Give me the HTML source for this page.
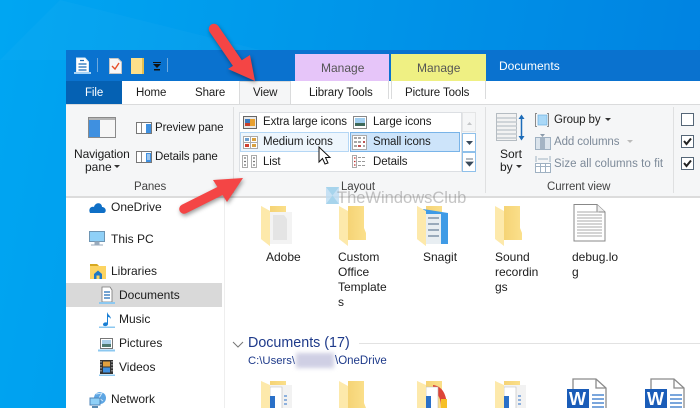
<!DOCTYPE html>
<html><head><meta charset="utf-8">
<style>
html,body{margin:0;padding:0}
#p{position:relative;width:700px;height:408px;overflow:hidden;background:linear-gradient(100deg,#00a6f2 0%,#0098ea 40%,#0080e0 100%);font-family:"Liberation Sans",sans-serif;font-size:12px;color:#1c1c1c}
.a{position:absolute}
.t{position:absolute;white-space:nowrap;line-height:14px}
.r{font-size:11.5px;letter-spacing:-.1px}
.l{color:#444}
.g{color:#7d8a99}
svg{position:absolute;overflow:visible}
</style></head><body><div id="p">
<svg class="a" style="left:0;top:0" width="700" height="50"><path d="M60 0 L300 60 L0 60Z" fill="#fff" opacity=".025"/></svg>
<div class="a" style="left:66px;top:50px;width:634px;height:31px;background:#0a72cf"></div>
<div class="a" style="left:66px;top:81px;width:634px;height:24px;background:#fff"></div>
<div class="a" style="left:66px;top:81px;width:56px;height:23px;background:#0561b3"></div>
<div class="a" style="left:239px;top:81px;width:52px;height:24px;background:#f5f6f7;border:1px solid #dadbdc;border-bottom:0;box-sizing:border-box"></div>
<div class="a" style="left:295px;top:54px;width:94px;height:27px;background:#e6c5f9"></div>
<div class="a" style="left:391px;top:54px;width:95px;height:27px;background:#eff083"></div>
<div class="a" style="left:388px;top:81px;width:1px;height:18px;background:#dadbdc"></div>
<div class="a" style="left:391px;top:81px;width:1px;height:18px;background:#dadbdc"></div>
<div class="a" style="left:485px;top:81px;width:1px;height:18px;background:#dadbdc"></div>
<div class="a" style="left:66px;top:104px;width:634px;height:1px;background:#dadbdc"></div>
<div class="a" style="left:66px;top:105px;width:634px;height:91px;background:#f5f6f7"></div>
<div class="a" style="left:66px;top:196px;width:634px;height:2px;background:#dcdcdc"></div>
<div class="a" style="left:66px;top:198px;width:634px;height:210px;background:#fff"></div>
<div class="a" style="left:233px;top:107px;width:1px;height:86px;background:#dfe0e1"></div>
<div class="a" style="left:485px;top:107px;width:1px;height:86px;background:#dfe0e1"></div>
<div class="a" style="left:673px;top:107px;width:1px;height:86px;background:#dfe0e1"></div>
<div class="a" style="left:224px;top:198px;width:1px;height:210px;background:#eeeeee"></div>

<!-- quick access -->
<svg style="left:72px;top:55px" width="100" height="24">
<path d="M4.500 3H13L16.500 7V17H4.500Z" fill="#fff" stroke="#dfeaf5"/><path d="M6.500 9h8M6.500 12h8M6.500 15h8M8 5.500h4" stroke="#1d6cb8" stroke-width="1.200"/><path d="M2 17H19V19H2Z" fill="#a8d4f5"/>
<rect x="25" y="3" width="1" height="14" fill="#6ea9dd"/>
<path d="M37.500 3.500H46L49.500 7V18.500H37.500Z" fill="#f7f7f7" stroke="#c5c5c5"/><path d="M40 11L43 14L47 8" fill="none" stroke="#e8502b" stroke-width="1.400"/>
<rect x="59" y="3" width="12" height="16" fill="#fde08a"/><rect x="70" y="3" width="2" height="16" fill="#e6bf4f"/>
<path d="M81 9H89L85 13Z" fill="#111"/><rect x="81" y="7" width="8" height="1" fill="#111"/><rect x="82" y="14" width="6" height="1.500" fill="#111"/>
<rect x="95" y="3" width="1" height="14" fill="#6ea9dd"/>
</svg>

<!-- tabs -->
<div class="t r" style="left:85px;top:86px;color:#fff">File</div>
<div class="t r" style="left:136px;top:86px">Home</div>
<div class="t r" style="left:195px;top:86px">Share</div>
<div class="t r" style="left:253px;top:86px">View</div>
<div class="t r" style="left:309px;top:86px">Library Tools</div>
<div class="t r" style="left:405px;top:86px">Picture Tools</div>
<div class="t" style="left:321px;top:61px;color:#555">Manage</div>
<div class="t" style="left:417px;top:61px;color:#555">Manage</div>
<div class="t" style="left:499px;top:59px;color:#fff">Documents</div>

<!-- panes -->
<svg style="left:88px;top:117px" width="30" height="22"><rect x=".5" y=".5" width="27" height="20" fill="#f6f6f6" stroke="#8a8a8a"/><rect x="1" y="3" width="11" height="17" fill="#3f90e0"/><rect x="1" y="1" width="26" height="2" fill="#b5b5b5"/></svg>
<div class="t" style="left:74px;top:147px;letter-spacing:-.1px">Navigation</div>
<div class="t" style="left:85px;top:160px">pane</div>
<svg style="left:114px;top:165px" width="6" height="4"><path d="M0 0H6L3 3Z" fill="#333"/></svg>
<svg style="left:136px;top:122px" width="16" height="12"><rect x=".5" y=".5" width="15" height="11" fill="#fff" stroke="#777"/><rect x="5" y="1" width="1" height="10" fill="#888"/><rect x="10" y="2" width="5" height="9" fill="#3f90e0"/></svg>
<svg style="left:136px;top:151px" width="16" height="12"><rect x=".5" y=".5" width="15" height="11" fill="#fff" stroke="#777"/><rect x="5" y="1" width="1" height="10" fill="#888"/><rect x="10" y="2" width="5" height="9" fill="#3f90e0"/><path d="M11 4h3M11 6h3M11 8h3" stroke="#fff"/></svg>
<div class="t r" style="left:155px;top:121px">Preview pane</div>
<div class="t r" style="left:155px;top:150px">Details pane</div>
<div class="t r l" style="left:134px;top:180px">Panes</div>

<!-- layout gallery -->
<div class="a" style="left:239px;top:112px;width:223px;height:60px;background:#fff;border:1px solid #dcdfe3;box-sizing:border-box"></div>
<div class="a" style="left:240px;top:132px;width:109px;height:20px;background:#eef6fd;border:1px solid #b5d7f5;box-sizing:border-box"></div>
<div class="a" style="left:350px;top:132px;width:110px;height:20px;background:#cde4fa;border:1px solid #79b4e8;box-sizing:border-box"></div>
<div class="a" style="left:462px;top:112px;width:14px;height:20px;background:#f5f6f7;border:1px solid #e4e5e6;box-sizing:border-box"></div>
<div class="a" style="left:462px;top:133px;width:14px;height:19px;background:#fff;border:1px solid #8fc0ea;box-sizing:border-box"></div>
<div class="a" style="left:462px;top:152px;width:14px;height:20px;background:#fff;border:1px solid #8fc0ea;box-sizing:border-box"></div>
<svg style="left:465px;top:120px" width="10" height="50"><path d="M2 5L4.500 2L7 5Z" fill="#c4c6c8"/><path d="M1 21H8L4.500 25Z" fill="#3a4a5a"/><path d="M1 39H8M1 42H8L4.500 46Z" stroke="#3a4a5a" fill="#3a4a5a" stroke-width=".8"/></svg>
<svg style="left:243px;top:116px" width="14" height="13"><rect x=".5" y=".5" width="13" height="12" fill="#e8e8e8" stroke="#666"/><rect x="2" y="3" width="10" height="7" fill="#3d7bbf"/><rect x="7" y="3" width="5" height="7" fill="#e8a030"/><rect x="2" y="7" width="5" height="3" fill="#c8402a"/></svg>
<svg style="left:353px;top:116px" width="14" height="13"><rect x=".5" y=".5" width="13" height="12" fill="#fff" stroke="#888"/><rect x="2" y="2" width="10" height="5" fill="#9fcdef"/><rect x="2" y="7" width="10" height="3" fill="#3f6a5a"/></svg>
<svg style="left:243px;top:136px" width="15" height="13"><rect x=".5" y=".5" width="14" height="12" fill="#fff" stroke="#aaa"/><path d="M7.500 0V13M0 6.500H15" stroke="#aaa"/><rect x="2" y="2" width="4" height="3" fill="#6d9fd0"/><rect x="9" y="2" width="4" height="3" fill="#d8a040"/><rect x="2" y="8" width="4" height="3" fill="#d04030"/><rect x="9" y="8" width="4" height="3" fill="#d8a040"/></svg>
<svg style="left:352px;top:135px" width="15" height="15"><rect x=".5" y=".5" width="14" height="14" fill="#fff" stroke="#aaa"/><path d="M2 3h3M6 3h3M11 3h2M2 7h3M6 7h3M11 7h2M2 11h3M6 11h3M11 11h2" stroke="#888" stroke-width="1.500"/><path d="M11 7h2M6 11h3" stroke="#c03030" stroke-width="1.500"/></svg>
<svg style="left:242px;top:155px" width="16" height="13"><path d="M.5.5h5v12h-5zM9.500.5h5v12h-5z" fill="#fff" stroke="#aaa"/><path d="M2 3h2M2 6.500h2M2 10h2M11 3h2M11 6.500h2M11 10h2" stroke="#777" stroke-width="1.200"/></svg>
<svg style="left:352px;top:155px" width="16" height="13"><path d="M.5.5h4v12h-4z" fill="#fff" stroke="#aaa"/><path d="M2 3h1.500M2 6.500h1.500M2 10h1.500" stroke="#c03030" stroke-width="1.200"/><path d="M6 2.500h3M10 2.500h3M6 6.500h3M10 6.500h3M6 10.500h3M10 10.500h3" stroke="#999"/></svg>
<div class="t r" style="left:263px;top:115px">Extra large icons</div>
<div class="t r" style="left:373px;top:115px">Large icons</div>
<div class="t r" style="left:263px;top:135px">Medium icons</div>
<div class="t r" style="left:373px;top:135px">Small icons</div>
<div class="t r" style="left:263px;top:155px">List</div>
<div class="t r" style="left:373px;top:155px">Details</div>
<div class="t r l" style="left:341px;top:180px">Layout</div>

<!-- current view -->
<svg style="left:496px;top:113px" width="32" height="30"><rect x=".5" y=".5" width="20" height="27" fill="#f2f2f2" stroke="#b5bcc2"/><path d="M1 5h20M1 9h20M1 13h20M1 17h20M1 21h20M1 25h20" stroke="#c3cad0" stroke-width="1.500"/><path d="M25.500 3V26" stroke="#1d6cb8" stroke-width="1.500"/><path d="M22.500 6L25.500 1.500L28.500 6ZM22.500 23L25.500 27.500L28.500 23Z" fill="#1d6cb8"/></svg>
<div class="t" style="left:500px;top:147px">Sort</div>
<div class="t" style="left:500px;top:160px">by</div>
<svg style="left:516px;top:165px" width="6" height="4"><path d="M0 0H6L3 3Z" fill="#333"/></svg>
<svg style="left:535px;top:113px" width="16" height="14"><path d="M2 .5H.5V13.500H2M12 .5H13.500V13.500H12" fill="none" stroke="#8a8a8a"/><rect x="3" y="2" width="9" height="10" fill="#a9d8f7" stroke="#6fb2e0" stroke-width=".7"/></svg>
<svg style="left:535px;top:134px" width="17" height="17"><rect x=".5" y="3.500" width="15" height="12" fill="#dbe4ec" stroke="#9fb1c2"/><rect x="5" y="4" width="5" height="11" fill="#a4b4c4"/><path d="M5 0H10L7.500 3Z" fill="#8a9aaa"/></svg>
<svg style="left:535px;top:156px" width="17" height="18"><path d="M1 0V6M15 0V6M3 3H13" stroke="#9fb1c2"/><rect x=".5" y="7.500" width="15" height="9" fill="#fff" stroke="#9fb1c2"/><path d="M0 10.500H16M5.500 8V16M10.500 8V16" stroke="#9fb1c2"/></svg>
<div class="t r" style="left:554px;top:113px">Group by</div>
<svg style="left:605px;top:118px" width="6" height="4"><path d="M0 0H6L3 3Z" fill="#333"/></svg>
<div class="t g r" style="left:554px;top:135px">Add columns</div>
<svg style="left:627px;top:140px" width="6" height="4"><path d="M0 0H6L3 3Z" fill="#bbb"/></svg>
<div class="t g r" style="left:554px;top:157px;letter-spacing:.05px">Size all columns to fit</div>
<div class="t r l" style="left:547px;top:180px">Current view</div>
<svg style="left:681px;top:113px" width="14" height="72"><rect x=".5" y=".5" width="12" height="12" fill="#fff" stroke="#556677"/><rect x=".5" y="22.500" width="12" height="12" fill="#fff" stroke="#556677"/><rect x=".5" y="44.500" width="12" height="12" fill="#fff" stroke="#556677"/><path d="M3 28L5.500 31L10 25.500M3 50L5.500 53L10 47.500" fill="none" stroke="#222" stroke-width="2"/></svg>

<!-- watermark -->
<svg style="left:326px;top:187px" width="13" height="17"><rect width="13" height="17" fill="#bcdcf2" opacity=".8"/><path d="M0 0L6.500 8.500L13 0M0 17L6.500 8.500L13 17" fill="#a7d4ec"/></svg>
<div class="t" style="left:337px;top:190px;font-size:16.500px;line-height:17px;color:rgba(110,110,110,.4)">TheWindowsClub</div>

<!-- nav -->
<div class="a" style="left:66px;top:283px;width:156px;height:24px;background:#d9d9d9"></div>
<svg style="left:89px;top:200px" width="18" height="14"><path d="M1 13C-1 9 2 6 5 7C6 2 13 2 13 7C17 7 18 12 15 13Z" fill="#0f6fc6"/></svg>
<svg style="left:89px;top:231px" width="18" height="16"><rect x=".5" y=".5" width="15" height="10" fill="#8fd0f7" stroke="#6e95b3"/><path d="M6 11h4v2H6zM2 14h12" stroke="#9ab" fill="#9ab"/></svg>
<svg style="left:90px;top:263px" width="17" height="16"><path d="M0 1H7L9 3H16V16H0Z" fill="#fcd462"/><path d="M0 1H7L9 3H0Z" fill="#d7a922"/><path d="M4 11L8 7.500L12 11V16H9.500V12.500H6.500V16H4Z" fill="#1f78c8"/></svg>
<svg style="left:98px;top:286px" width="18" height="19"><path d="M4 1H12L14 4V16H4Z" fill="#fff" stroke="#777" stroke-width=".8"/><path d="M6 6h6M6 9h6M6 12h6" stroke="#1d6cb8" stroke-width="1.300"/><path d="M1 16H17V18H1Z" fill="#8cc8f0"/></svg>
<svg style="left:98px;top:311px" width="18" height="18"><path d="M9 1C10 4 13 5 13 8C12 6.500 11 6 10 6V13C10 15.500 5 16 5 13.500C5 11.500 7.500 11 9 11.500Z" fill="#1a7fd4"/><path d="M1 15.500H17V17H1Z" fill="#8cc8f0"/></svg>
<svg style="left:98px;top:335px" width="18" height="18"><rect x="2.500" y="3.500" width="12" height="10" fill="#fff" stroke="#777"/><rect x="4" y="5" width="9" height="7" fill="#a9cfe8"/><rect x="4" y="9" width="9" height="3" fill="#4f7a70"/><path d="M0 14.500H17V16.500H0Z" fill="#8cc8f0"/></svg>
<svg style="left:98px;top:359px" width="18" height="18"><rect x="2" y="1" width="13" height="14" fill="#333"/><rect x="5" y="2.500" width="7" height="5" fill="#e0a040"/><rect x="5" y="8.500" width="7" height="5" fill="#3f90e0"/><path d="M3 2v12M14 2v12" stroke="#ccc" stroke-dasharray="1.500 1.500"/><path d="M1 15.500H17V17H1Z" fill="#8cc8f0"/></svg>
<svg style="left:89px;top:391px" width="18" height="17"><circle cx="11" cy="7" r="6" fill="#5da6e4"/><path d="M7 3L13 2L10 7L14 10" stroke="#cfe6f8" fill="none"/><rect x="1" y="7" width="10" height="7" fill="#8fd0f7" stroke="#4f86b8"/><path d="M3 16h6" stroke="#5a8ab0" stroke-width="2"/></svg>
<div class="t" style="left:111px;top:200px">OneDrive</div>
<div class="t" style="left:111px;top:232px">This PC</div>
<div class="t" style="left:111px;top:264px">Libraries</div>
<div class="t" style="left:119px;top:288px">Documents</div>
<div class="t" style="left:119px;top:312px">Music</div>
<div class="t" style="left:119px;top:336px">Pictures</div>
<div class="t" style="left:119px;top:360px">Videos</div>
<div class="t" style="left:111px;top:392px">Network</div>

<!-- folders -->
<svg width="0" height="0"><defs>
<linearGradient id="b" x1="0" x2="1"><stop offset="0" stop-color="#f2cd6a"/><stop offset="1" stop-color="#fbe08c"/></linearGradient>
<symbol id="f" viewBox="0 0 34 42" width="34" height="42" overflow="visible"><path d="M0 0H25V22L27 27V34H9V0Z" fill="url(#b)"/><path d="M0 0L9 5V40L0 33Z" fill="#fde9ab"/></symbol>
<symbol id="w" viewBox="0 0 40 30" width="40" height="30" overflow="visible"><path d="M6 1H29L39 10V40H6Z" fill="#fff" stroke="#8a8a8a" stroke-width="1.300"/><path d="M29 1V10H39" fill="none" stroke="#8a8a8a" stroke-width="1.300"/><rect x="0" y="11" width="22" height="19" fill="#1a5cb8"/><path d="M25 17h12M25 21h12M25 25h12M25 29h12" stroke="#2a70c8" stroke-width="1.300"/></symbol>
</defs></svg>
<svg style="left:261px;top:206px" width="34" height="42"><use href="#f"/><path d="M9 6H31V38H9Z" fill="#f3f3f3"/><path d="M12 9H23L26 13V34H12Z" fill="#e4e4e4"/><path d="M0 0L9 5V40L0 33Z" fill="#fde9ab"/></svg>
<svg style="left:339px;top:206px" width="34" height="42"><use href="#f"/></svg>
<svg style="left:417px;top:206px" width="34" height="42"><use href="#f"/><path d="M6 3L31 7V38L10 38Z" fill="#3f9be6"/><path d="M9 8H24V38H9Z" fill="#e8eef2"/><path d="M11 12h11M11 18h11M11 24h11M11 30h11" stroke="#9ab" stroke-width="2"/><path d="M0 0L9 5V40L0 33Z" fill="#fde9ab"/></svg>
<svg style="left:495px;top:206px" width="34" height="42"><use href="#f"/></svg>
<svg style="left:573px;top:204px" width="34" height="42"><path d="M1 .5H24L32 8V37H1Z" fill="#fff" stroke="#888"/><path d="M24 .5V8H32" fill="#eee" stroke="#888"/><path d="M4 8h22M4 11h25M4 14h25M4 17h25M4 20h25M4 23h25M4 26h25M4 29h25M4 32h25" stroke="#aaa"/></svg>
<div class="t" style="left:266px;top:250px">Adobe</div>
<div class="t" style="left:338px;top:250px;line-height:15px">Custom<br>Office<br>Template<br>s</div>
<div class="t" style="left:423px;top:250px">Snagit</div>
<div class="t" style="left:495px;top:250px;line-height:15px">Sound<br>recordin<br>gs</div>
<div class="t" style="left:572px;top:250px;line-height:15px">debug.lo<br>g</div>

<svg style="left:232px;top:341px" width="12" height="8"><path d="M1 1L6 6L11 1" fill="none" stroke="#777"/></svg>
<div class="t" style="left:248px;top:335px;font-size:14.300px;line-height:16px;color:#1e3a8a">Documents (17)</div>
<div class="a" style="left:359px;top:343px;width:341px;height:1px;background:#e2e2e2"></div>
<div class="t" style="left:248px;top:354px;font-size:11.300px;color:#1e3a8a">C:\Users\</div>
<div class="a" style="left:296px;top:353px;width:38px;height:15px;background:#cfcfe4;filter:blur(2px)"></div>
<div class="t" style="left:335px;top:354px;font-size:11.500px;color:#1e3a8a">\OneDrive</div>

<svg style="left:261px;top:381px" width="34" height="42"><use href="#f"/><path d="M9 4H31V30H9Z" fill="#f2f2f2"/><path d="M9 6H21V30H9Z" fill="#fff" stroke="#bbb" stroke-width=".6"/><path d="M9 15H14V27H9Z" fill="#2a70c8"/><path d="M23 15h3M23 19h3M23 23h3" stroke="#2a70c8"/><path d="M0 0L9 4V27H0Z" fill="#fde9ab"/></svg>
<svg style="left:339px;top:381px" width="34" height="42"><use href="#f"/></svg>
<svg style="left:417px;top:381px" width="34" height="42"><use href="#f"/><path d="M16 4C25 5 30 13 30 27H24C24 18 22 13 16 11Z" fill="#dd4438"/><path d="M24 18H30V27H24Z" fill="#f6bf26"/><path d="M9 6H21V30H9Z" fill="#fff" stroke="#bbb" stroke-width=".6"/><path d="M9 15H14V27H9Z" fill="#2a70c8"/><path d="M0 0L9 4V27H0Z" fill="#fde9ab"/></svg>
<svg style="left:495px;top:381px" width="34" height="42"><use href="#f"/><path d="M9 4H31V30H9Z" fill="#f2f2f2"/><path d="M9 6H21V30H9Z" fill="#fff" stroke="#bbb" stroke-width=".6"/><path d="M9 15H14V27H9Z" fill="#2a70c8"/><path d="M23 15h3M23 19h3M23 23h3" stroke="#2a70c8"/><path d="M0 0L9 4V27H0Z" fill="#fde9ab"/></svg>
<svg style="left:567px;top:378px" width="40" height="30"><use href="#w"/></svg>
<svg style="left:645px;top:378px" width="40" height="30"><use href="#w"/></svg>
<div class="t" style="left:569px;top:391px;font-size:18px;line-height:17px;font-weight:bold;color:#fff">W</div>
<div class="t" style="left:647px;top:391px;font-size:18px;line-height:17px;font-weight:bold;color:#fff">W</div>

<!-- cursor -->
<svg style="left:318px;top:146px" width="14" height="20"><path d="M1 1V16L4.500 12.500L7 18L10 17L7.500 11.500H12Z" fill="#fff" stroke="#111"/></svg>

<!-- arrows -->
<svg style="left:0;top:0;filter:drop-shadow(1px 2px 2px rgba(0,0,0,.4))" width="700" height="408">
<path d="M214 29L238 64" stroke="#f44545" stroke-width="10.500" stroke-linecap="round"/>
<path d="M228 69L250 55L255 81Z" fill="#f44545"/>
<path d="M184 209L222 190" stroke="#f44545" stroke-width="9.500" stroke-linecap="round"/>
<path d="M213 180L243 178L227 202Z" fill="#f44545"/>
</svg>
</div></body></html>
